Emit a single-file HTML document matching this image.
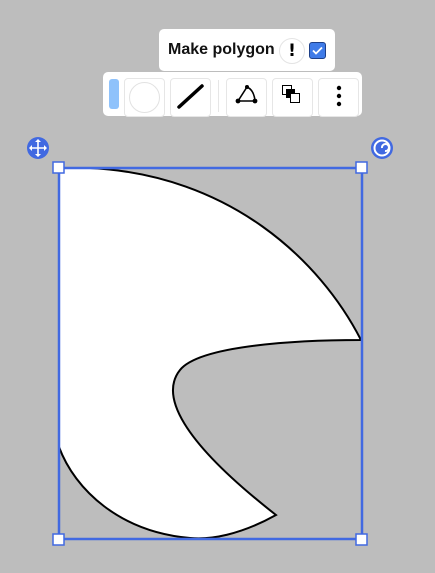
<!DOCTYPE html>
<html><head><style>
html,body{margin:0;padding:0;width:435px;height:573px;overflow:hidden;background:#bdbdbd;font-family:"Liberation Sans",sans-serif;}
.pop{position:absolute;left:159px;top:29px;width:176px;height:42px;background:#fff;border-radius:5px;}
.pop span{position:absolute;left:9px;top:12px;font-weight:bold;font-size:16px;color:#111;}
.excl{position:absolute;left:279px;top:38px;width:24px;height:24px;border-radius:50%;border:1px solid #e4e4e4;background:#fff;text-align:center;font-weight:900;font-size:17px;line-height:24px;font-family:"DejaVu Sans",sans-serif;}
.chk{position:absolute;left:309px;top:42px;width:15px;height:15px;border-radius:3px;background:#3f7be8;border:1px solid #1d3f88;}
.bar{position:absolute;left:103px;top:72px;width:259px;height:44px;background:#fff;border-radius:5px;}
.btn{position:absolute;top:78px;height:37px;width:39px;border:1px solid #e6e6e6;border-radius:4px;background:#fff;}
</style></head><body>
<div class="pop"><span>Make polygon</span></div>
<div class="excl">!</div>
<div class="chk"><svg width="15" height="15" viewBox="0 0 15 15"><path d="M3 7.5l3 3 6-6" stroke="#fff" stroke-width="1.8" fill="none"/></svg></div>
<div class="bar"></div>
<div style="position:absolute;left:109px;top:79px;width:10px;height:30px;background:#8fc2fb;border-radius:3px"></div>
<div class="btn" style="left:124px"><div style="position:absolute;left:4px;top:3px;width:29px;height:29px;border-radius:50%;border:1px solid #e2e2e2"></div></div>
<div class="btn" style="left:170px"><svg width="39" height="37"><path d="M8 28L31 7" stroke="#000" stroke-width="3.5" stroke-linecap="round"/></svg></div>
<div style="position:absolute;left:218px;top:80px;width:1px;height:32px;background:#e6e6e6"></div>
<div class="btn" style="left:226px"><svg width="39" height="37"><path d="M11 22L20 8Q27 11 28 22Z" stroke="#000" stroke-width="1.6" fill="none"/><circle cx="11" cy="22" r="2.4"/><circle cx="28" cy="22" r="2.4"/><circle cx="20" cy="8" r="2"/></svg></div>
<div class="btn" style="left:272px"><svg width="39" height="37"><rect x="9.5" y="6.5" width="9" height="9" fill="#fff" stroke="#000"/><rect x="13" y="10" width="9" height="9" fill="#000"/><rect x="17.5" y="14.5" width="9" height="9" fill="#fff" stroke="#000"/></svg></div>
<div class="btn" style="left:318px"><svg width="39" height="37"><circle cx="20" cy="9" r="2.2"/><circle cx="20" cy="17" r="2.2"/><circle cx="20" cy="25" r="2.2"/></svg></div>
<svg style="position:absolute;left:0;top:0" width="435" height="573">
<path d="M59,168 L90,168 C230,175 320,260 361,340 C300,340 200,345 180,370 C160,395 180,440 276,515 C240,535 210,540 190,538 C120,532 75,490 59,447 Z" fill="#fff" stroke="#000" stroke-width="2"/>
<rect x="59" y="168" width="303" height="371" fill="none" stroke="#4169e1" stroke-width="2.5"/>
<g fill="#fff" stroke="#4169e1" stroke-width="1.5"><rect x="53" y="162" width="11" height="11"/><rect x="356" y="162" width="11" height="11"/><rect x="53" y="534" width="11" height="11"/><rect x="356" y="534" width="11" height="11"/></g>
<circle cx="38" cy="148" r="11" fill="#4169e1"/>
<path d="M38,140V156M30,148H46" stroke="#fff" stroke-width="1.6"/>
<path d="M38,139l-3,3h6zM38,157l-3,-3h6zM29,148l3,-3v6zM47,148l-3,-3v6z" fill="#fff"/>
<circle cx="382" cy="148" r="11" fill="#4169e1"/>
<circle cx="382" cy="148" r="7.5" fill="none" stroke="#fff" stroke-width="2"/>
<path d="M382,148 A3.5,3.5 0 1 1 385,151" fill="none" stroke="#fff" stroke-width="2"/>
</svg>
</body></html>
